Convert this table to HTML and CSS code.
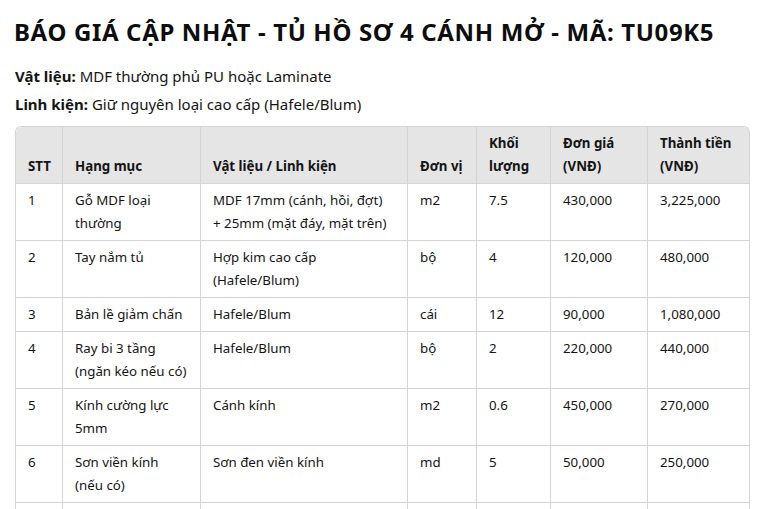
FILE: index.html
```html
<!DOCTYPE html>
<html lang="vi">
<head>
<meta charset="utf-8">
<title>Báo giá</title>
<link rel="stylesheet" href="styles.css">
</head>
<body>
<h1 class="title">BÁO GIÁ CẬP NHẬT - TỦ HỒ SƠ 4 CÁNH MỞ - MÃ: TU09K5</h1>
<p class="info"><strong>Vật liệu:</strong> MDF thường phủ PU hoặc Laminate</p>
<p class="info"><strong>Linh kiện:</strong> Giữ nguyên loại cao cấp (Hafele/Blum)</p>
<table class="quote">
<colgroup>
<col class="c1"><col class="c2"><col class="c3"><col class="c4"><col class="c5"><col class="c6"><col class="c7">
</colgroup>
<thead>
<tr><th>STT</th><th>Hạng mục</th><th>Vật liệu / Linh kiện</th><th class="nowrap">Đơn vị</th><th>Khối lượng</th><th>Đơn giá (VNĐ)</th><th>Thành tiền (VNĐ)</th></tr>
</thead>
<tbody>
<tr><td>1</td><td>Gỗ MDF loại thường</td><td>MDF 17mm (cánh, hồi, đợt) +&nbsp;25mm (mặt đáy, mặt trên)</td><td>m2</td><td>7.5</td><td>430,000</td><td>3,225,000</td></tr>
<tr><td>2</td><td>Tay nắm tủ</td><td>Hợp kim cao cấp (Hafele/Blum)</td><td>bộ</td><td>4</td><td>120,000</td><td>480,000</td></tr>
<tr><td>3</td><td>Bản lề giảm chấn</td><td>Hafele/Blum</td><td>cái</td><td>12</td><td>90,000</td><td>1,080,000</td></tr>
<tr><td>4</td><td>Ray bi 3 tầng (ngăn kéo nếu có)</td><td>Hafele/Blum</td><td>bộ</td><td>2</td><td>220,000</td><td>440,000</td></tr>
<tr><td>5</td><td>Kính cường lực 5mm</td><td>Cánh kính</td><td>m2</td><td>0.6</td><td>450,000</td><td>270,000</td></tr>
<tr><td>6</td><td>Sơn viền kính (nếu&nbsp;có)</td><td>Sơn đen viền kính</td><td>md</td><td>5</td><td>50,000</td><td>250,000</td></tr>
<tr><td>7</td><td>Lắp đặt &amp; vận chuyển</td><td>Trọn gói</td><td>gói</td><td>1</td><td>500,000</td><td>500,000</td></tr>
</tbody>
</table>
</body>
</html>
```
FILE: styles.css
```css
html, body {
  margin: 0;
  background: #ffffff;
}
body {
  padding: 0 24px 20px 15px;
  font-family: "Noto Sans", "Open Sans", sans-serif;
  color: #141414;
  font-size: 15px;
}
.title {
  font-size: 24px;
  font-weight: 700;
  letter-spacing: 0.65px;
  margin: 16px 0 14px;
  margin-left: -1px;
  line-height: 32px;
  color: #0d0d0d;
}
.info {
  margin: 0;
  line-height: 28px;
}
.info strong {
  font-weight: 700;
}
.quote {
  margin-top: 8px;
  border-collapse: separate;
  border-spacing: 0;
  width: 734px;
  font-size: 13.3px;
  line-height: 23px;
  border-top: 1px solid #d4d4d4;
  border-left: 1px solid #d4d4d4;
  border-radius: 6px 6px 0 0;
  table-layout: fixed;
}
.c1 { width: 47px; }
.c2 { width: 138px; }
.c3 { width: 207px; }
.c4 { width: 69px; }
.c5 { width: 74px; }
.c6 { width: 97px; }
.c7 { width: 102px; }
.quote th, .quote td {
  padding: 5px 8px 5px 12px;
  text-align: left;
  border-right: 1px solid #d4d4d4;
  border-bottom: 1px solid #d4d4d4;
}
.quote th {
  background: #e5e5e5;
  font-weight: 700;
  vertical-align: bottom;
}
.quote th.nowrap { white-space: nowrap; }
.quote th:first-child { border-top-left-radius: 6px; }
.quote th:last-child { border-top-right-radius: 6px; }
.quote td {
  vertical-align: top;
}
```
